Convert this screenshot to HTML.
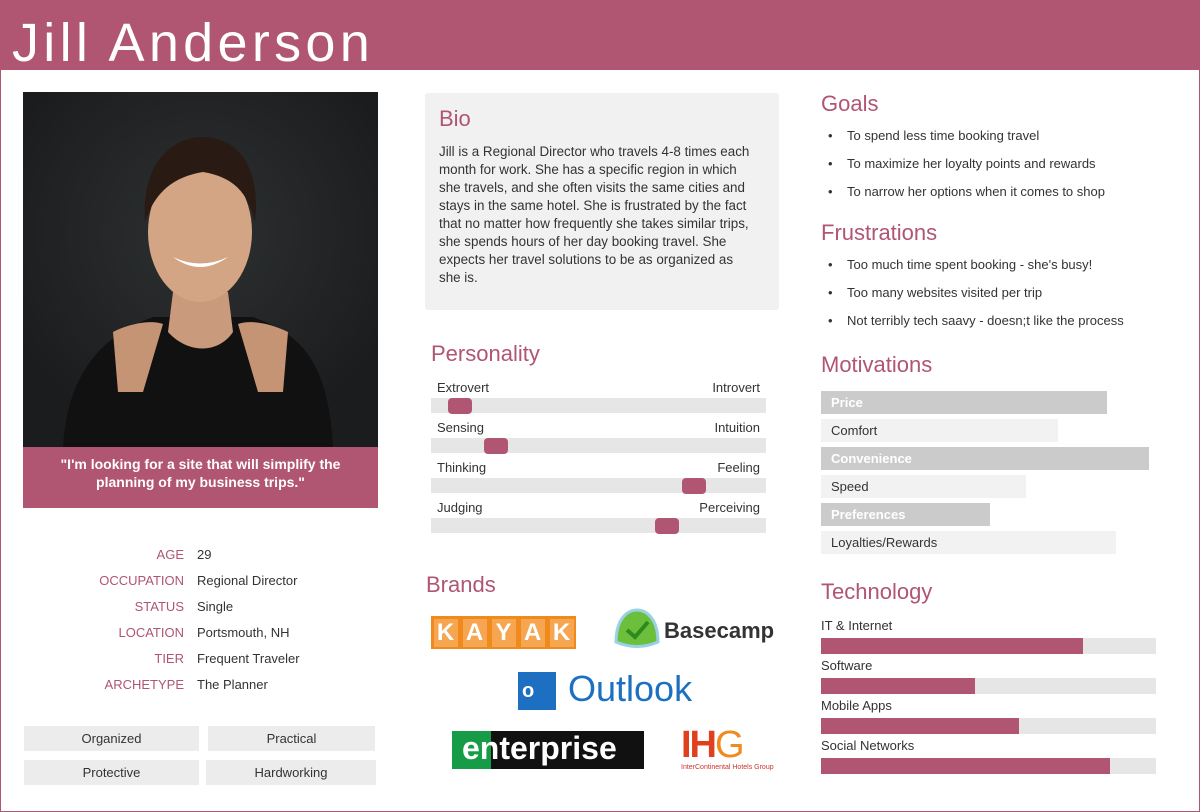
<!DOCTYPE html>
<html><head><meta charset="utf-8"><style>
*{margin:0;padding:0;box-sizing:border-box}
body{width:1200px;height:812px;background:#fff;font-family:"Liberation Sans",sans-serif;color:#333;position:relative;overflow:hidden}
.frame{position:absolute;left:0;top:0;width:1200px;height:812px;border:1px solid #b05572;border-top:none}
.hdr{position:absolute;left:0;top:0;width:1200px;height:70px;background:#b05572;color:#fff;font-size:54px;padding-left:12px;line-height:86px;letter-spacing:4.3px}
.a{position:absolute}
.h{position:absolute;color:#b05572;font-size:22px}
.lbl{position:absolute;color:#b05572;font-size:13px;text-align:right;width:170px;left:14px}
.val{position:absolute;left:197px;font-size:13px}
.tag{position:absolute;background:#ececec;font-size:13px;text-align:center;height:25px;line-height:25px}
.bar{position:absolute;left:431px;width:335px;height:15px;background:#e6e6e6}
.knob{position:absolute;top:0;width:24px;height:16px;background:#b05572;border-radius:4px}
.pl{position:absolute;font-size:13px}
.li{position:absolute;left:828px;font-size:13px}
.li:before{content:"•";position:absolute;left:0}
.li span{margin-left:19px}
.mv{position:absolute;left:821px;height:23px;line-height:23px;font-size:13px;padding-left:10px}
.mv.d{background:#cbcbcb;color:#fff;font-weight:bold}
.mv.l{background:#f2f2f2}
.tb{position:absolute;left:821px;width:335px;height:16px;background:#e6e6e6}
.tb div{height:16px;background:#b05572}
</style></head><body>
<div class="hdr">Jill Anderson</div>
<div class="frame"></div>

<div class="a" style="left:23px;top:92px;width:355px;height:355px;background:#222426;overflow:hidden">
<svg width="355" height="355" viewBox="0 0 355 355">
<defs><radialGradient id="bg" cx="50%" cy="40%" r="60%"><stop offset="0" stop-color="#2d3032"/><stop offset="1" stop-color="#1b1c1d"/></radialGradient></defs>
<rect width="355" height="355" fill="url(#bg)"/>
<path d="M40 355 C45 270 90 240 130 225 L230 225 C270 240 305 260 310 355Z" fill="#111"/>
<path d="M150 200 L205 200 L210 240 C195 262 165 262 145 240Z" fill="#c99a7c"/>
<path d="M90 240 C110 230 130 228 140 232 L120 300 L95 300Z" fill="#c59474"/>
<path d="M265 240 C245 230 225 228 215 232 L235 300 L260 300Z" fill="#c59474"/>
<ellipse cx="177" cy="140" rx="52" ry="70" fill="#d3a585"/>
<path d="M122 130 C118 70 150 45 180 45 C215 45 238 75 232 130 C225 100 210 85 180 80 C150 85 132 100 122 130Z" fill="#2a1a14"/>
<path d="M150 165 Q177 185 205 165 Q177 178 150 165Z" fill="#fff"/>
</svg>
</div>
<div class="a" style="left:23px;top:447px;width:355px;height:61px;background:#b05572;color:#fff;font-size:14px;font-weight:bold;text-align:center;padding-top:8px;line-height:18px">"I'm looking for a site that will simplify the<br>planning of my business trips."</div>

<div class="lbl" style="top:547px">AGE</div><div class="val" style="top:547px">29</div>
<div class="lbl" style="top:573px">OCCUPATION</div><div class="val" style="top:573px">Regional Director</div>
<div class="lbl" style="top:599px">STATUS</div><div class="val" style="top:599px">Single</div>
<div class="lbl" style="top:625px">LOCATION</div><div class="val" style="top:625px">Portsmouth, NH</div>
<div class="lbl" style="top:651px">TIER</div><div class="val" style="top:651px">Frequent Traveler</div>
<div class="lbl" style="top:677px">ARCHETYPE</div><div class="val" style="top:677px">The Planner</div>

<div class="tag" style="left:24px;top:726px;width:175px">Organized</div>
<div class="tag" style="left:208px;top:726px;width:167px">Practical</div>
<div class="tag" style="left:24px;top:760px;width:175px">Protective</div>
<div class="tag" style="left:206px;top:760px;width:170px">Hardworking</div>

<div class="a" style="left:425px;top:93px;width:354px;height:217px;background:#f1f1f1;border-radius:3px"></div>
<div class="h" style="left:439px;top:106px">Bio</div>
<div class="a" style="left:439px;top:143px;line-height:18px;font-size:13.4px;white-space:nowrap">Jill is a Regional Director who travels 4-8 times each<br>month for work. She has a specific region in which<br>she travels, and she often visits the same cities and<br>stays in the same hotel. She is frustrated by the fact<br>that no matter how frequently she takes similar trips,<br>she spends hours of her day booking travel. She<br>expects her travel solutions to be as organized as<br>she is.</div>

<div class="h" style="left:431px;top:341px">Personality</div>
<div class="pl" style="left:437px;top:380px">Extrovert</div><div class="pl" style="left:700px;top:380px;width:60px;text-align:right">Introvert</div>
<div class="bar" style="top:398px"><div class="knob" style="left:17px"></div></div>
<div class="pl" style="left:437px;top:420px">Sensing</div><div class="pl" style="left:700px;top:420px;width:60px;text-align:right">Intuition</div>
<div class="bar" style="top:438px"><div class="knob" style="left:53px"></div></div>
<div class="pl" style="left:437px;top:460px">Thinking</div><div class="pl" style="left:700px;top:460px;width:60px;text-align:right">Feeling</div>
<div class="bar" style="top:478px"><div class="knob" style="left:251px"></div></div>
<div class="pl" style="left:437px;top:500px">Judging</div><div class="pl" style="left:680px;top:500px;width:80px;text-align:right">Perceiving</div>
<div class="bar" style="top:518px"><div class="knob" style="left:224px"></div></div>

<div class="h" style="left:426px;top:572px">Brands</div>
<div class="a" style="left:431px;top:616px;width:145px;height:33px;background:#f08a1d;display:flex;justify-content:space-around;align-items:center">
<span style="background:#f6a550;color:#fff;font-weight:bold;font-size:24px;width:24px;text-align:center">K</span><span style="background:#f6a550;color:#fff;font-weight:bold;font-size:24px;width:24px;text-align:center">A</span><span style="background:#f6a550;color:#fff;font-weight:bold;font-size:24px;width:24px;text-align:center">Y</span><span style="background:#f6a550;color:#fff;font-weight:bold;font-size:24px;width:24px;text-align:center">A</span><span style="background:#f6a550;color:#fff;font-weight:bold;font-size:24px;width:24px;text-align:center">K</span></div>
<svg class="a" style="left:614px;top:608px" width="46" height="40"><path d="M2 34 C2 10 14 2 23 2 C32 2 44 10 44 34 C30 40 16 40 2 34Z" fill="#6bbf3a" stroke="#9ad1e6" stroke-width="3"/><path d="M13 22 L21 29 L34 14" stroke="#2e8a1e" stroke-width="4" fill="none"/></svg>
<div class="a" style="left:664px;top:618px;font-size:22px;font-weight:bold;color:#333">Basecamp</div>
<div class="a" style="left:518px;top:672px;width:38px;height:38px;background:#1c6fc1"></div>
<div class="a" style="left:522px;top:680px;font-size:20px;font-weight:bold;color:#fff">o</div>
<div class="a" style="left:568px;top:668px;font-size:36px;color:#1c6fc1">Outlook</div>
<div class="a" style="left:452px;top:731px;width:192px;height:38px;background:#111"></div>
<div class="a" style="left:452px;top:731px;width:39px;height:38px;background:#169b47"></div>
<div class="a" style="left:462px;top:730px;font-size:32px;font-weight:bold;color:#fff">enterprise</div>
<div class="a" style="left:681px;top:724px;font-size:38px;font-weight:bold;color:#e0401e;letter-spacing:-2px">IH<span style="color:#f08a1d;font-weight:normal">G</span></div>
<div class="a" style="left:681px;top:764px;font-size:7px;color:#c33">InterContinental Hotels Group</div>

<div class="h" style="left:821px;top:91px">Goals</div>
<div class="li" style="top:128px"><span>To spend less time booking travel</span></div>
<div class="li" style="top:156px"><span>To maximize her loyalty points and rewards</span></div>
<div class="li" style="top:184px"><span>To narrow her options when it comes to shop</span></div>
<div class="h" style="left:821px;top:220px">Frustrations</div>
<div class="li" style="top:257px"><span>Too much time spent booking - she's busy!</span></div>
<div class="li" style="top:285px"><span>Too many websites visited per trip</span></div>
<div class="li" style="top:313px"><span>Not terribly tech saavy - doesn;t like the process</span></div>

<div class="h" style="left:821px;top:352px">Motivations</div>
<div class="mv d" style="top:391px;width:286px">Price</div>
<div class="mv l" style="top:419px;width:237px">Comfort</div>
<div class="mv d" style="top:447px;width:328px">Convenience</div>
<div class="mv l" style="top:475px;width:205px">Speed</div>
<div class="mv d" style="top:503px;width:169px">Preferences</div>
<div class="mv l" style="top:531px;width:295px">Loyalties/Rewards</div>

<div class="h" style="left:821px;top:579px">Technology</div>
<div class="pl" style="left:821px;top:618px">IT &amp; Internet</div><div class="tb" style="top:638px"><div style="width:262px"></div></div>
<div class="pl" style="left:821px;top:658px">Software</div><div class="tb" style="top:678px"><div style="width:154px"></div></div>
<div class="pl" style="left:821px;top:698px">Mobile Apps</div><div class="tb" style="top:718px"><div style="width:198px"></div></div>
<div class="pl" style="left:821px;top:738px">Social Networks</div><div class="tb" style="top:758px"><div style="width:289px"></div></div>
</body></html>
